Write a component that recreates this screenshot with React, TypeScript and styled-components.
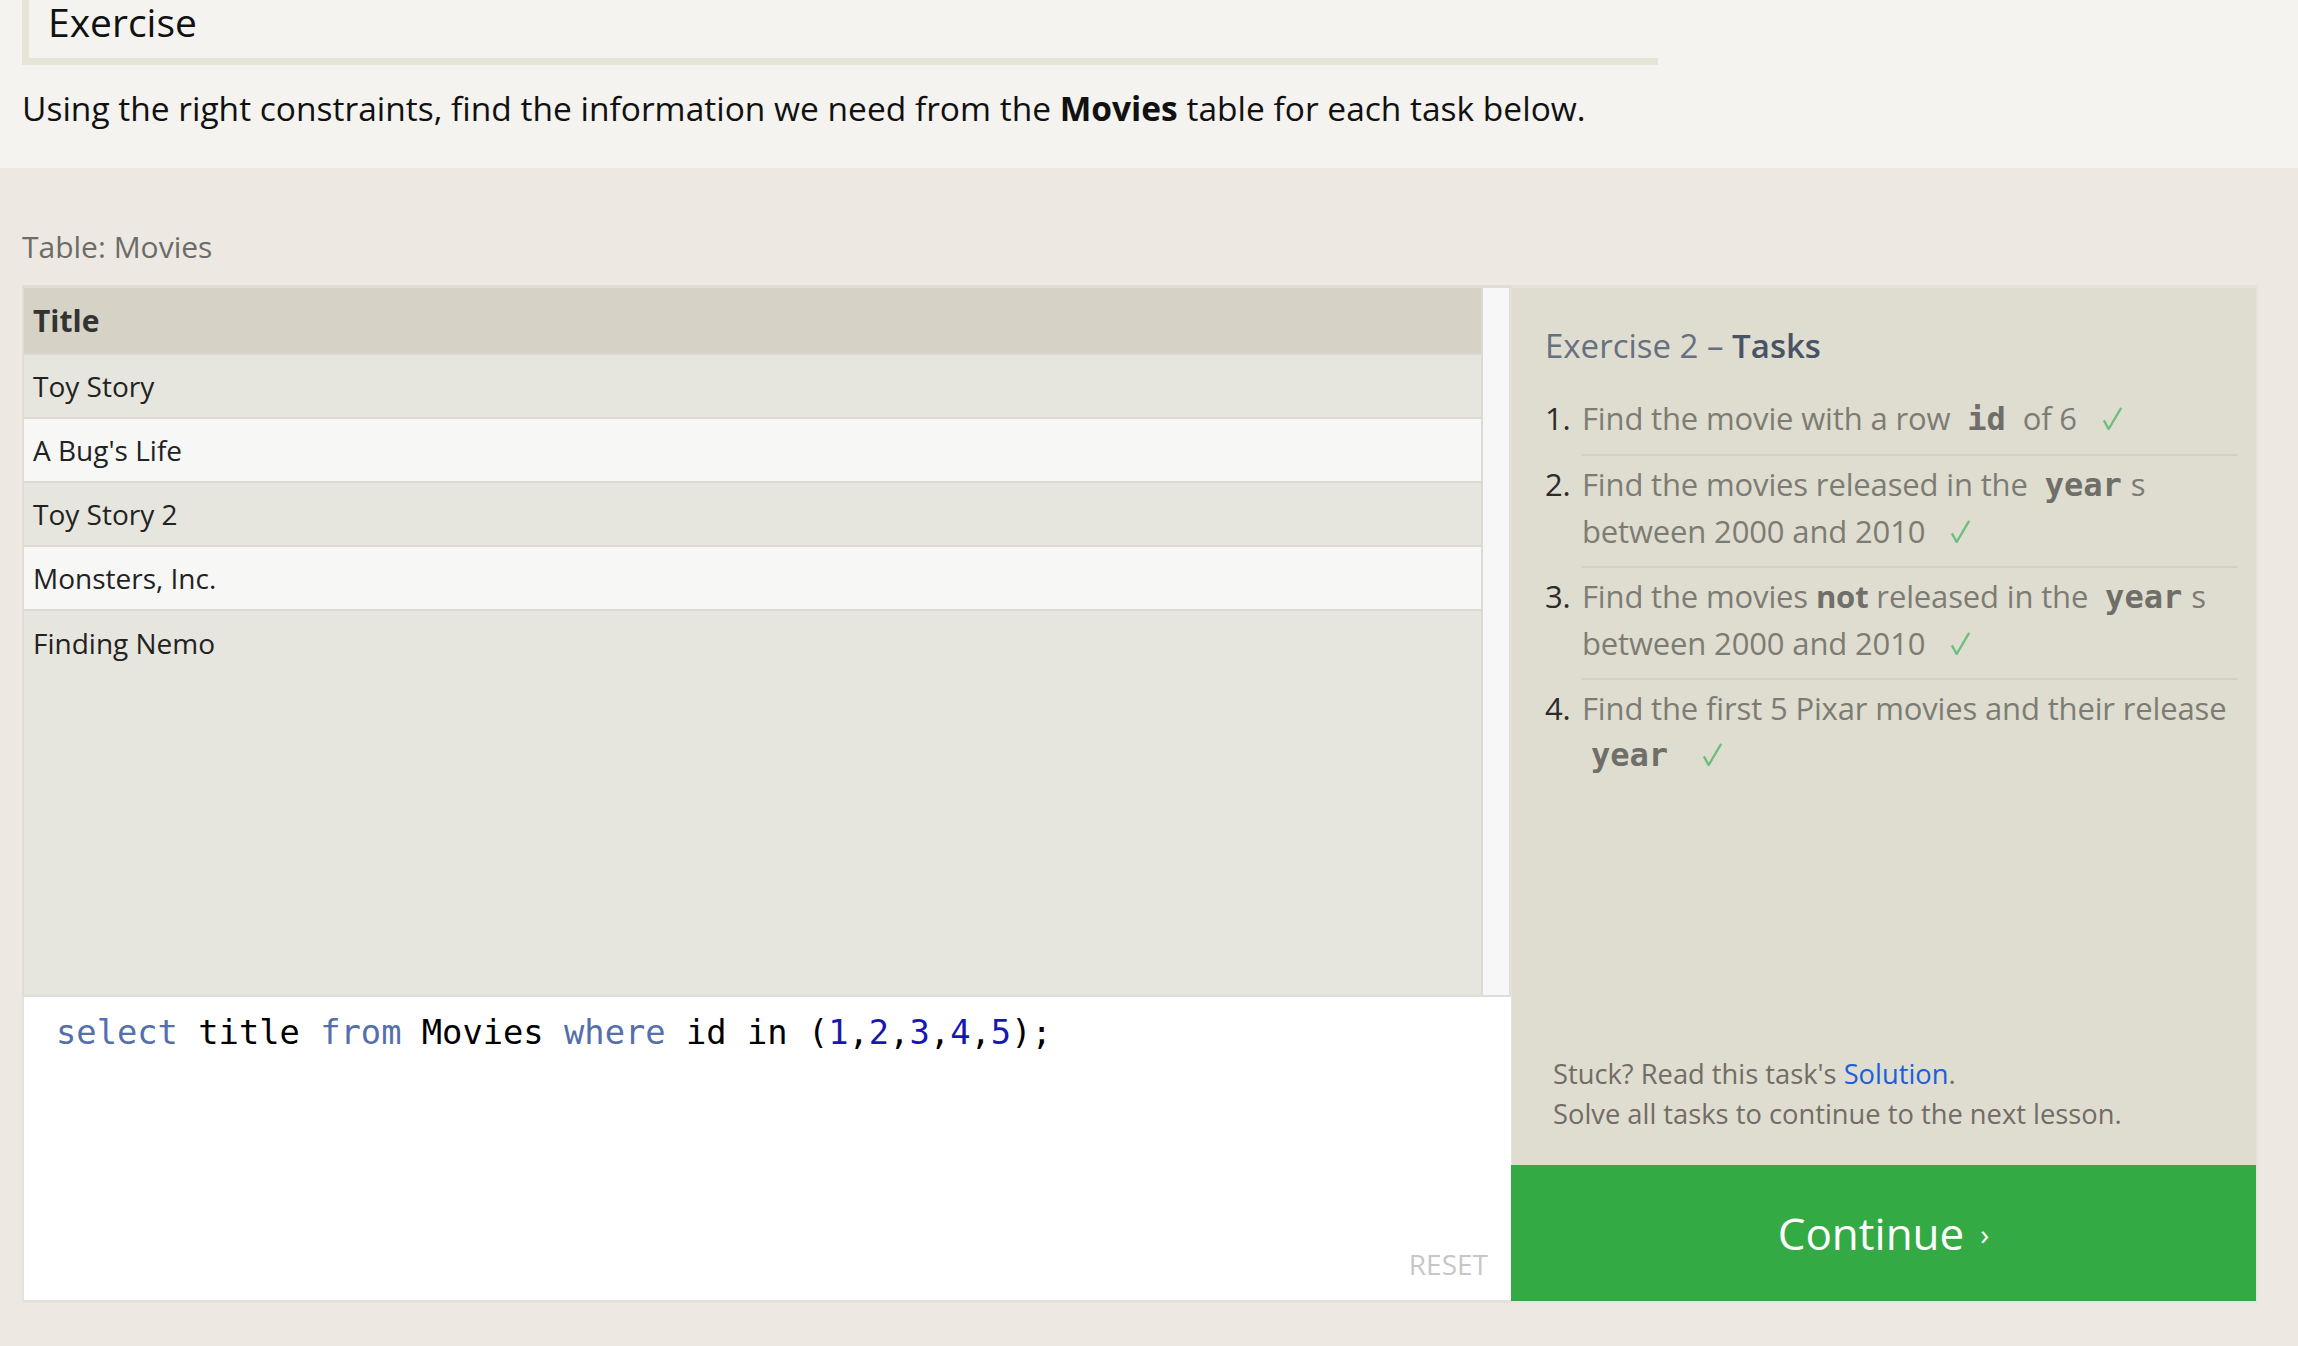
import React from "react";
import styled, { createGlobalStyle } from "styled-components";

const GlobalStyle = createGlobalStyle`
  html, body {
    margin: 0;
    padding: 0;
    background: #ede9e2;
    font-family: "Open Sans", "Liberation Sans", sans-serif;
  }
  * { box-sizing: border-box; }
`;

const Page = styled.div`
  width: 2298px;
  min-height: 1346px;
  background: #ede9e2;
`;

const IntroSection = styled.section`
  background: #f4f3ef;
  padding: 0 22px 40px;
`;

const ExerciseHeading = styled.h2`
  margin: 0;
  width: 1636px;
  height: 65px;
  padding: 2px 0 0 19px;
  border-left: 7px solid #e6e4d6;
  border-bottom: 7px solid #e6e4d6;
  font-size: 39px;
  line-height: 40px;
  font-weight: 400;
  color: #111;
`;

const IntroText = styled.p`
  margin: 23px 0 0;
  font-size: 33.5px;
  line-height: 40px;
  color: #111;
  white-space: nowrap;
`;

const LowerSection = styled.section`
  padding: 0 22px 43px;
`;

const TableLabel = styled.div`
  margin: 59px 0 18px;
  font-size: 30px;
  line-height: 40px;
  color: #6c6c68;
`;

const Workspace = styled.div`
  display: flex;
  width: 2236px;
`;

const LeftColumn = styled.div`
  width: 1489px;
  display: flex;
  flex-direction: column;
`;

const TableFrame = styled.div`
  height: 712px;
  display: flex;
  background: #e7e6de;
  border-top: 3px solid #dfddd5;
  border-left: 2px solid #dfddd5;
  border-bottom: 2px solid #dfddd5;
`;

const TableArea = styled.div`
  flex: 1;
  overflow: hidden;
`;

const DataTable = styled.table`
  width: 100%;
  border-collapse: collapse;
`;

const HeaderCell = styled.th`
  height: 66px;
  padding: 0 9px;
  background: #d6d3c6;
  text-align: left;
  font-size: 30px;
  font-weight: 700;
  color: #333;
`;

const Row = styled.tr<{ $light: boolean }>`
  background: ${(p) => (p.$light ? "#f7f7f6" : "#e7e6de")};
`;

const Cell = styled.td`
  height: 64px;
  padding: 0 9px;
  border-top: 2px solid #dbd9d1;
  font-size: 28px;
  color: #222;
`;

const ScrollTrack = styled.div`
  width: 30px;
  flex: none;
  background: #f7f7f7;
  border-left: 2px solid #dcdad2;
  border-right: 2px solid #e2e0d8;
`;

const Editor = styled.div`
  height: 306px;
  display: flex;
  flex-direction: column;
  background: #fff;
  border-left: 2px solid #e4e2da;
  border-bottom: 3px solid #e4e2da;
`;

const CodeLine = styled.div`
  padding: 16px 0 0 32px;
  font-family: "DejaVu Sans Mono", "Liberation Mono", monospace;
  font-size: 33.75px;
  line-height: 40px;
  color: #000;
  white-space: pre;
`;

const Keyword = styled.span`
  color: #5370ad;
`;

const Num = styled.span`
  color: #1717b3;
`;

const EditorFooter = styled.div`
  margin-top: auto;
  display: flex;
  justify-content: flex-end;
  padding: 0 23px 20px 0;
`;

const ResetButton = styled.button`
  background: none;
  border: 0;
  padding: 0;
  font-family: "Open Sans", "Liberation Sans", sans-serif;
  font-size: 28px;
  line-height: 32px;
  color: #c7c7c7;
  text-transform: uppercase;
`;

const RightColumn = styled.div`
  width: 747px;
  display: flex;
  flex-direction: column;
  border-right: 2px solid #e6e4dc;
  border-bottom: 2px solid #e6e4dc;
`;

const TasksPanel = styled.div`
  flex: 1;
  display: flex;
  flex-direction: column;
  background: #deddd0;
  border-top: 3px solid #e3e1d8;
  border-left: 1px solid #e3e1d8;
  padding: 36px 18px 31px 33px;
`;

const PanelTitle = styled.h3`
  margin: 0;
  font-size: 33px;
  line-height: 44px;
  font-weight: 400;
  color: #67707f;
`;

const TitleStrong = styled.span`
  color: #4a5366;
  font-weight: 600;
`;

const TaskList = styled.ol`
  list-style: none;
  margin: 22px 0 0;
  padding: 0;
`;

const TaskItem = styled.li`
  display: flex;
  font-size: 31px;
  line-height: 46px;
  letter-spacing: -0.15px;
`;

const TaskNumber = styled.span`
  width: 37px;
  flex: none;
  padding-top: 5px;
  color: #2b2b2b;
`;

const TaskBody = styled.div<{ $last?: boolean }>`
  flex: 1;
  padding: 5px 0 12px;
  border-bottom: ${(p) => (p.$last ? "0" : "2px solid #d3d1c6")};
  color: #7d7c74;
`;

const Code = styled.code`
  font-family: "DejaVu Sans Mono", "Liberation Mono", monospace;
  font-weight: 700;
  font-size: 32px;
  letter-spacing: 0;
  color: #6f6e69;
  padding: 0 9px;
`;

const Strong = styled.strong`
  font-weight: 700;
  color: #6f6e68;
`;

const CheckIcon = styled.svg`
  width: 23px;
  height: 23px;
  margin-left: 24px;
  vertical-align: baseline;
`;

const PanelNote = styled.div`
  margin-top: auto;
  padding-left: 8px;
  font-size: 27.3px;
  line-height: 40px;
  color: #736b66;
`;

const NoteLink = styled.a`
  color: #1c5fd9;
  text-decoration: none;
`;

const ContinueButton = styled.button`
  height: 136px;
  width: 100%;
  display: flex;
  align-items: center;
  justify-content: center;
  background: #34aa44;
  border: 0;
  color: #fff;
  font-family: "Open Sans", "Liberation Sans", sans-serif;
  font-size: 44px;
`;

const Chevron = styled.span`
  font-size: 30px;
  margin-left: 16px;
`;

const Check = () => (
  <CheckIcon viewBox="0 0 24 24" aria-label="completed">
    <polyline
      points="3,14 8,23 21,1"
      fill="none"
      stroke="#6dbe7c"
      strokeWidth="2.4"
      strokeLinejoin="miter"
    />
  </CheckIcon>
);

const movies = ["Toy Story", "A Bug's Life", "Toy Story 2", "Monsters, Inc.", "Finding Nemo"];

export default function App() {
  return (
    <Page>
      <GlobalStyle />
      <IntroSection>
        <ExerciseHeading>Exercise</ExerciseHeading>
        <IntroText>
          Using the right constraints, find the information we need from the <b>Movies</b> table for
          each task below.
        </IntroText>
      </IntroSection>
      <LowerSection>
        <TableLabel>Table: Movies</TableLabel>
        <Workspace>
          <LeftColumn>
            <TableFrame>
              <TableArea>
                <DataTable>
                  <thead>
                    <tr>
                      <HeaderCell>Title</HeaderCell>
                    </tr>
                  </thead>
                  <tbody>
                    {movies.map((m, i) => (
                      <Row key={m} $light={i % 2 === 1}>
                        <Cell>{m}</Cell>
                      </Row>
                    ))}
                  </tbody>
                </DataTable>
              </TableArea>
              <ScrollTrack />
            </TableFrame>
            <Editor>
              <CodeLine>
                <Keyword>select</Keyword> title <Keyword>from</Keyword> Movies{" "}
                <Keyword>where</Keyword> id in (<Num>1</Num>,<Num>2</Num>,<Num>3</Num>,<Num>4</Num>,
                <Num>5</Num>);
              </CodeLine>
              <EditorFooter>
                <ResetButton>Reset</ResetButton>
              </EditorFooter>
            </Editor>
          </LeftColumn>
          <RightColumn>
            <TasksPanel>
              <PanelTitle>
                Exercise 2 – <TitleStrong>Tasks</TitleStrong>
              </PanelTitle>
              <TaskList>
                <TaskItem>
                  <TaskNumber>1.</TaskNumber>
                  <TaskBody>
                    Find the movie with a row <Code>id</Code> of 6
                    <Check />
                  </TaskBody>
                </TaskItem>
                <TaskItem>
                  <TaskNumber>2.</TaskNumber>
                  <TaskBody>
                    Find the movies released in the <Code>year</Code>s between 2000 and 2010
                    <Check />
                  </TaskBody>
                </TaskItem>
                <TaskItem>
                  <TaskNumber>3.</TaskNumber>
                  <TaskBody>
                    Find the movies <Strong>not</Strong> released in the <Code>year</Code>s between
                    2000 and 2010
                    <Check />
                  </TaskBody>
                </TaskItem>
                <TaskItem>
                  <TaskNumber>4.</TaskNumber>
                  <TaskBody $last>
                    Find the first 5 Pixar movies and their release <Code>year</Code>
                    <Check />
                  </TaskBody>
                </TaskItem>
              </TaskList>
              <PanelNote>
                Stuck? Read this task's <NoteLink href="#">Solution</NoteLink>.
                <br />
                Solve all tasks to continue to the next lesson.
              </PanelNote>
            </TasksPanel>
            <ContinueButton>
              Continue<Chevron>›</Chevron>
            </ContinueButton>
          </RightColumn>
        </Workspace>
      </LowerSection>
    </Page>
  );
}
